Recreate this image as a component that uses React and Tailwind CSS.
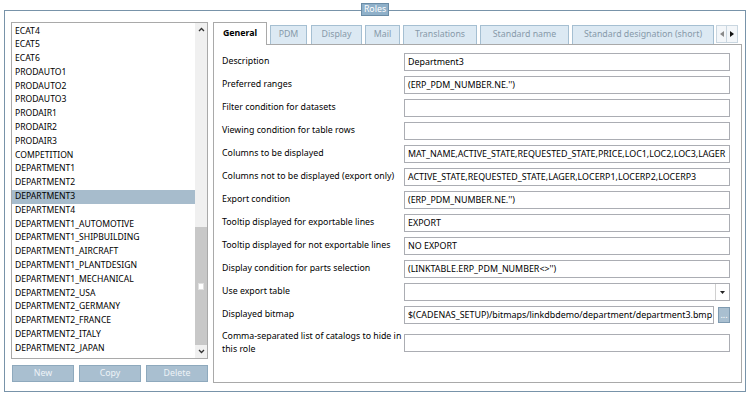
import React from 'react';

const roles = [
  'ECAT4', 'ECAT5', 'ECAT6', 'PRODAUTO1', 'PRODAUTO2', 'PRODAUTO3', 'PRODAIR1', 'PRODAIR2', 'PRODAIR3',
  'COMPETITION', 'DEPARTMENT1', 'DEPARTMENT2', 'DEPARTMENT3', 'DEPARTMENT4', 'DEPARTMENT1_AUTOMOTIVE',
  'DEPARTMENT1_SHIPBUILDING', 'DEPARTMENT1_AIRCRAFT', 'DEPARTMENT1_PLANTDESIGN', 'DEPARTMENT1_MECHANICAL',
  'DEPARTMENT2_USA', 'DEPARTMENT2_GERMANY', 'DEPARTMENT2_FRANCE', 'DEPARTMENT2_ITALY', 'DEPARTMENT2_JAPAN',
];

const tabs = [
  { label: 'PDM', cls: 'ml-[3px] w-[37px]' },
  { label: 'Display', cls: 'ml-[4px] w-[51px]' },
  { label: 'Mail', cls: 'ml-[3px] w-[35px]' },
  { label: 'Translations', cls: 'ml-[3px] w-[74px]' },
  { label: 'Standard name', cls: 'ml-[3px] w-[89px]' },
  { label: 'Standard designation (short)', cls: 'ml-[3px] w-[142px]' },
];

const fields = [
  ['Description', 'Department3'],
  ['Preferred ranges', "(ERP_PDM_NUMBER.NE.'')"],
  ['Filter condition for datasets', ''],
  ['Viewing condition for table rows', ''],
  ['Columns to be displayed', 'MAT_NAME,ACTIVE_STATE,REQUESTED_STATE,PRICE,LOC1,LOC2,LOC3,LAGER'],
  ['Columns not to be displayed (export only)', 'ACTIVE_STATE,REQUESTED_STATE,LAGER,LOCERP1,LOCERP2,LOCERP3'],
  ['Export condition', "(ERP_PDM_NUMBER.NE.'')"],
  ['Tooltip displayed for exportable lines', 'EXPORT'],
  ['Tooltip displayed for not exportable lines', 'NO EXPORT'],
  ['Display condition for parts selection', "(LINKTABLE.ERP_PDM_NUMBER<>'')"],
];

function Field({ value }) {
  return (
    <div className="flex-1 h-[18px] border border-[#abadb3] bg-white px-[3px] flex items-center whitespace-nowrap overflow-hidden text-[8.9px]">
      {value}
    </div>
  );
}

function Chevron({ down }) {
  return (
    <svg width="7" height="5" viewBox="0 0 7 5">
      <path d={down ? 'M1 1 L3.5 3.5 L6 1' : 'M1 4 L3.5 1.5 L6 4'} fill="none" stroke="#333" strokeWidth="1.3" />
    </svg>
  );
}

export default function App() {
  return (
    <div className="w-[750px] h-[395px] bg-white pt-[10px] pl-[4px] font-['Noto_Sans',sans-serif] text-[8.8px] text-black">
      <div className="relative w-[742px] h-[382px] border border-[#7893a9] flex pl-[6px] pt-[11px]">
        {/* Titre du groupe */}
        <div className="absolute left-[356px] top-[-8px] w-[28px] h-[13px] bg-[#8fb0c9] border border-[#6a8ca6] text-white flex items-center justify-center leading-none">
          Roles
        </div>

        {/* Liste des rôles */}
        <div className="w-[197px] flex flex-col">
          <div className="h-[337px] border border-[#a9a9a9] flex">
            <div className="flex-1 pt-[1.5px] text-[8.6px]">
              {roles.map((r) => (
                <div
                  key={r}
                  className={
                    'h-[13.8px] leading-[13.8px] pl-[3px] whitespace-nowrap ' +
                    (r === 'DEPARTMENT3' ? 'bg-[#a7bccc]' : '')
                  }
                >
                  {r}
                </div>
              ))}
            </div>
            <div className="w-[12px] flex flex-col">
              <div className="h-[12px] bg-[#f0f0f0] flex items-center justify-center">
                <Chevron />
              </div>
              <div className="h-[192px] bg-[#f0f0f0]" />
              <div className="h-[118px] bg-[#c8c8c8] flex items-center justify-center">
                <div className="w-[6px] h-[7px] bg-white border border-[#e0e0e0]" />
              </div>
              <div className="flex-1 bg-[#f0f0f0] flex items-center justify-center">
                <Chevron down />
              </div>
            </div>
          </div>
          <div className="mt-[6px] flex gap-[5px] pl-px">
            {['New', 'Copy', 'Delete'].map((b) => (
              <div
                key={b}
                className="w-[62px] h-[17px] bg-[#a9bfd0] border border-[#8ea9bd] text-[#eef3f7] flex items-center justify-center"
              >
                {b}
              </div>
            ))}
          </div>
        </div>

        {/* Onglets */}
        <div className="ml-[5px] w-[529px] flex flex-col">
          <div className="h-[22px] flex items-end">
            <div className="relative z-10 -mb-px w-[54px] h-[23px] bg-white border border-b-0 border-[#a9a9a9] font-bold flex items-center justify-center">
              General
            </div>
            {tabs.map((t) => (
              <div
                key={t.label}
                className={
                  t.cls +
                  ' h-[19px] bg-[#dce9f3] border border-b-0 border-[#a5bfd2] text-[#8799a9] flex items-center justify-center whitespace-nowrap'
                }
              >
                {t.label}
              </div>
            ))}
            <div className="ml-[2px] h-[18px] mb-[1px] flex">
              <div className="w-[11px] border border-[#c9d6e0] bg-[#f3f6f9] flex items-center justify-center">
                <svg width="4" height="6" viewBox="0 0 4 6"><path d="M4 0 L0 3 L4 6 Z" fill="#8a8a8a" /></svg>
              </div>
              <div className="w-[11px] border border-l-0 border-[#c9d6e0] bg-[#f3f6f9] flex items-center justify-center">
                <svg width="4" height="6" viewBox="0 0 4 6"><path d="M0 0 L4 3 L0 6 Z" fill="#111" /></svg>
              </div>
            </div>
          </div>

          <div className="h-[339px] border border-[#a9a9a9] pt-[8px] pl-[8px] pr-[11px] flex flex-col gap-[5px]">
            {fields.map(([label, value]) => (
              <div key={label} className="flex items-center h-[18px]">
                <div className="w-[182px] whitespace-nowrap">{label}</div>
                <Field value={value} />
              </div>
            ))}

            <div className="flex items-center h-[18px]">
              <div className="w-[182px]">Use export table</div>
              <div className="flex-1 h-[18px] border border-[#abadb3] bg-white flex justify-end">
                <div className="w-[14px] border-l border-[#d0d0d0] flex items-center justify-center">
                  <svg width="5" height="3" viewBox="0 0 5 3"><path d="M0 0 L5 0 L2.5 3 Z" fill="#222" /></svg>
                </div>
              </div>
            </div>

            <div className="flex items-center h-[18px]">
              <div className="w-[182px]">Displayed bitmap</div>
              <Field value="$(CADENAS_SETUP)/bitmaps/linkdbdemo/department/department3.bmp" />
              <div className="ml-[4px] w-[12px] h-[16px] bg-[#a9bfd0] border border-[#7f9bb1] text-white flex items-center justify-center leading-none">
                ...
              </div>
            </div>

            <div className="flex items-start">
              <div className="w-[182px] leading-[13px] pt-px">
                Comma-separated list of catalogs to hide in
                <br />
                this role
              </div>
              <div className="flex-1 mt-[5px] h-[18px] border border-[#abadb3] bg-white" />
            </div>
          </div>
        </div>
      </div>
    </div>
  );
}
